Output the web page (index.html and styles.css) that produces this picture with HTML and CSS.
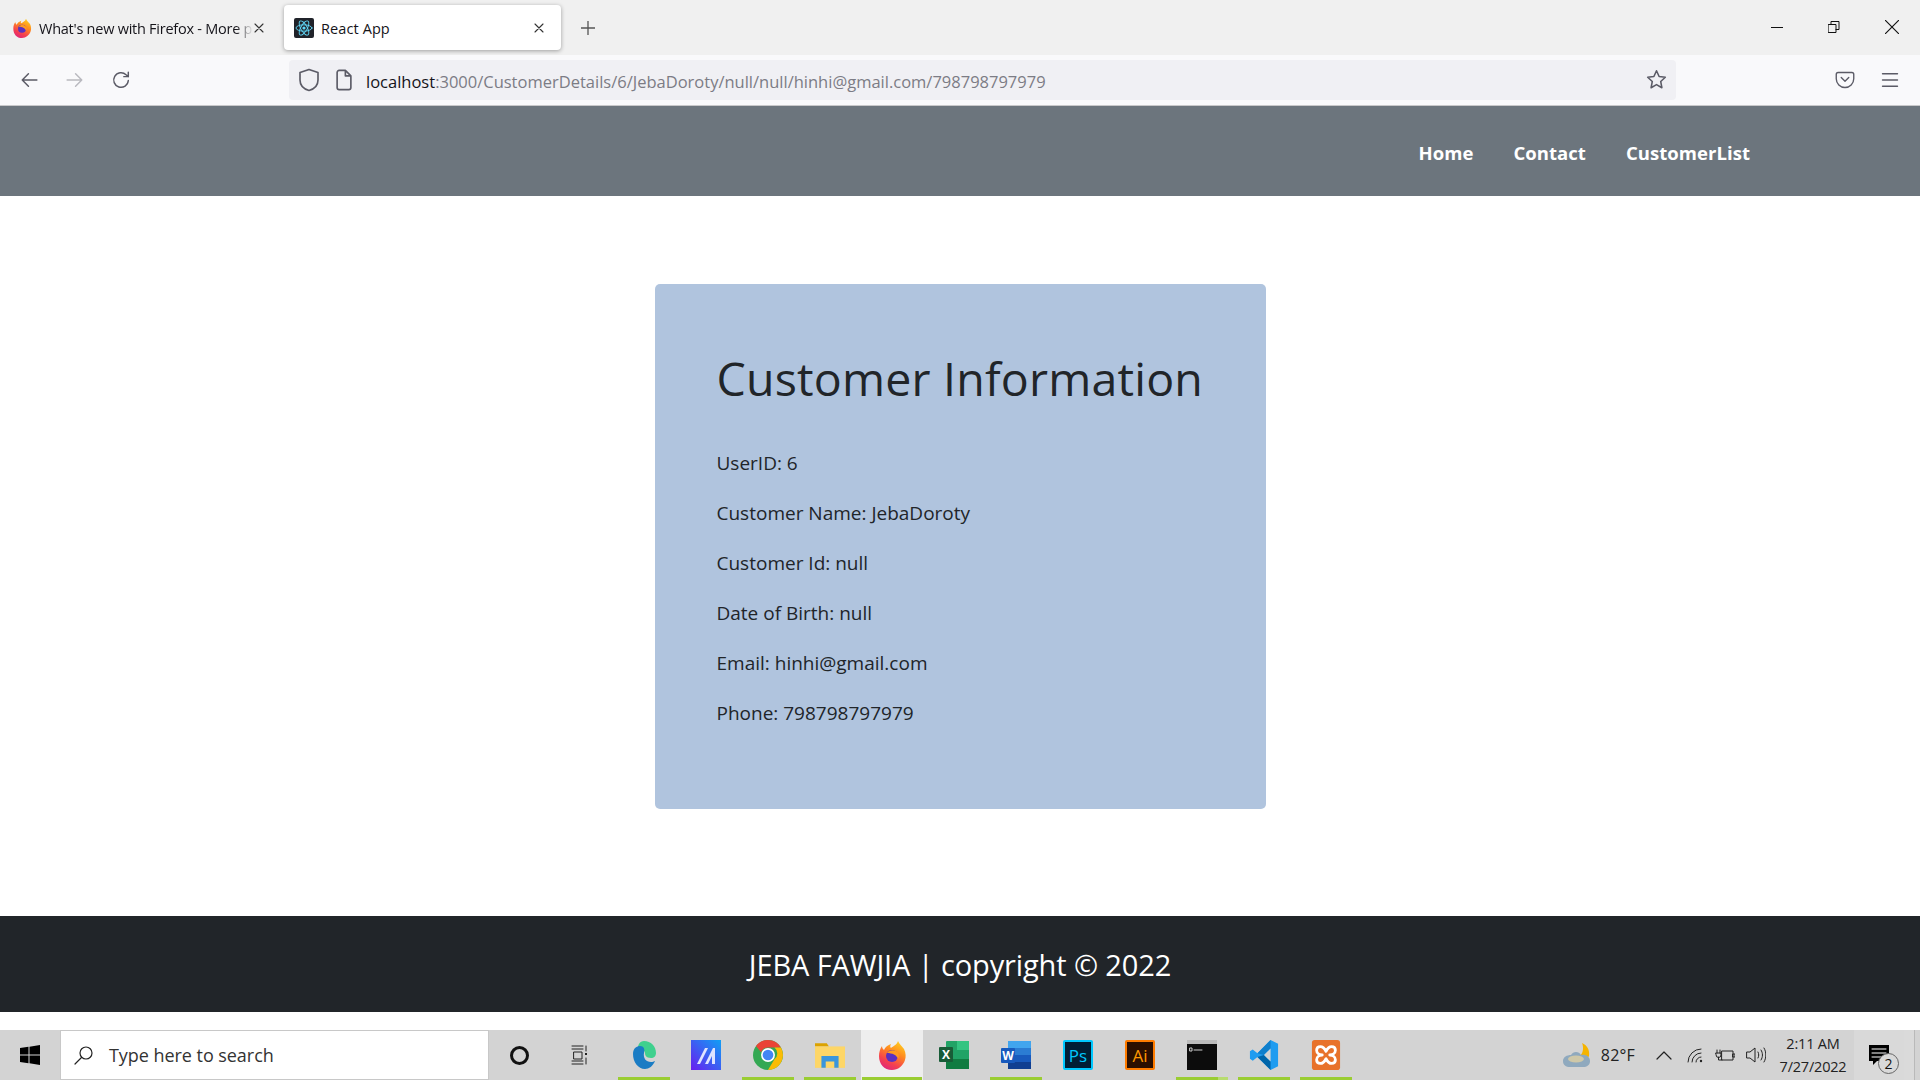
FILE: index.html
```html
<!DOCTYPE html>
<html lang="en">
<head>
<meta charset="utf-8">
<title>React App</title>
<link rel="stylesheet" href="styles.css">
</head>
<body>
<div class="tabbar">
  <div class="tab first">
    <svg class="fav" viewBox="0 0 28 30"><defs><linearGradient id="ff" x1=".8" y1="0" x2=".3" y2="1"><stop offset="0" stop-color="#ffd21f"/><stop offset=".4" stop-color="#ff8a1f"/><stop offset=".75" stop-color="#f5404f"/><stop offset="1" stop-color="#e0267a"/></linearGradient></defs><path d="M20 1c1 3 4 5 6 8 2 4 2 8 1 11-2 6-7 10-13 10C6 30 1 24 1 16c0-4 1-7 3-10 0 2 1 3 2 4 1-3 4-5 7-6-1 2-1 3 0 4 2-2 6-3 7-7z" fill="url(#ff)"/><circle cx="14" cy="16" r="6" fill="#5b2fc0"/><path d="M9 13c2-3 8-4 11 0 1 2 1 4 0 6-1-4-6-6-11-6z" fill="#ff9a1f"/></svg>
    <span class="tab-title fade">What's new with Firefox - More p</span>
    <svg class="x" viewBox="0 0 10 10"><path d="M1 1l8 8M9 1l-8 8"/></svg>
  </div>
  <div class="tab active">
    <svg class="fav" viewBox="0 0 20 20"><rect width="20" height="20" rx="2" fill="#20232a"/><g fill="none" stroke="#61dafb" stroke-width=".9"><ellipse cx="10" cy="10" rx="8" ry="3.200"/><ellipse cx="10" cy="10" rx="8" ry="3.200" transform="rotate(60 10 10)"/><ellipse cx="10" cy="10" rx="8" ry="3.200" transform="rotate(120 10 10)"/></g><circle cx="10" cy="10" r="1.600" fill="#61dafb"/></svg>
    <span class="tab-title">React App</span>
    <svg class="x" viewBox="0 0 10 10"><path d="M1 1l8 8M9 1l-8 8"/></svg>
  </div>
  <svg class="newtab" viewBox="0 0 14 14"><path d="M7 0v14M0 7h14"/></svg>
  <div class="winctl">
    <svg viewBox="0 0 12 12"><path d="M0 6.500h12"/></svg>
    <svg viewBox="0 0 12 12"><path d="M.5 3.500h7.500v8h-7.500zM3 3.500v-3h8v8h-3"/></svg>
    <svg class="close" viewBox="0 0 12 12"><path d="M0 0l12 12M12 0l-12 12"/></svg>
  </div>
</div>

<div class="toolbar">
  <div class="nav-btns">
    <svg viewBox="0 0 16 16"><path d="M15 8H2M7.500 2.500L2 8l5.500 5.500"/></svg>
    <svg class="dim" viewBox="0 0 16 16"><path d="M1 8h13M8.500 2.500L14 8l-5.500 5.500"/></svg>
    <svg viewBox="0 0 16 16"><path d="M14.500 8.500a6.500 6.500 0 1 1-2-5.200L14.500 5M14.500 1v4H10.500"/></svg>
  </div>
  <div class="urlbar">
    <svg class="u-shield" viewBox="0 0 16 16"><path d="M8 1l6 2v5c0 3.500-2.500 6-6 7-3.500-1-6-3.500-6-7V3z"/></svg>
    <svg class="u-page" viewBox="0 0 16 16"><path d="M3 2.500a1.500 1.500 0 0 1 1.500-1.500H9l4 4v8.500a1.500 1.500 0 0 1-1.500 1.500h-7A1.500 1.500 0 0 1 3 13.500zM9 1v4h4"/></svg>
    <span class="url"><b>localhost</b>:3000/CustomerDetails/6/JebaDoroty/null/null/hinhi@gmail.com/798798797979</span>
    <svg class="u-star" viewBox="0 0 16 16"><path d="M8 1.300l2 4.400 4.700.6-3.500 3.200.9 4.800L8 11.900l-4.100 2.400.9-4.800L1.300 6.300 6 5.700z"/></svg>
  </div>
  <div class="tool-right">
    <svg viewBox="0 0 16 16"><path d="M2.500 2h11A1.500 1.500 0 0 1 15 3.500V7a7 7 0 0 1-14 0V3.500A1.500 1.500 0 0 1 2.500 2zM5 6l3 3 3-3"/></svg>
    <svg viewBox="0 0 16 16"><path d="M2 3h12M2 8h12M2 13h12"/></svg>
  </div>
</div>

<header class="site-nav">
  <a>Home</a>
  <a>Contact</a>
  <a>CustomerList</a>
</header>

<main class="content">
  <section class="card">
    <h1>Customer Information</h1>
    <p>UserID: 6</p>
    <p>Customer Name: JebaDoroty</p>
    <p>Customer Id: null</p>
    <p>Date of Birth: null</p>
    <p>Email: hinhi@gmail.com</p>
    <p>Phone: 798798797979</p>
  </section>
</main>

<footer class="site-foot">JEBA FAWJIA | copyright © 2022</footer>
<div class="gap"></div>

<div class="taskbar">
  <svg class="start" viewBox="0 0 20 20"><path d="M0 3l8.500-1.200V9.500H0zM9.500 1.700L20 0v9.500H9.500zM0 10.500h8.500v7.700L0 17zM9.500 10.500H20V20L9.500 18.300z"/></svg>
  <div class="search">
    <svg viewBox="0 0 20 20"><circle cx="12" cy="8" r="6"/><path d="M7.500 12.500L1 19"/></svg>
    <span>Type here to search</span>
  </div>
  <div class="cortana"></div>
  <svg class="taskview" viewBox="0 0 20 20"><path d="M1 1h11M1 4h11M3 7h8v7H3zM1 16h11M1 19h11M15 1v5M15 13v6"/><rect x="14" y="8" width="2" height="2" class="solid"/></svg>
  <div class="apps">
    <div class="app run"><svg viewBox="0 0 24 30"><path d="M12 1c7 0 12 5 12 12 0 3-2 5-5 5-5 0-6-3-6-5 0-3-4-4-7-2C5 5 8 1 12 1z" fill="#3fd08e"/><path d="M1 14C1 8 5 6 8 6c4 0 5 3 4 7-1 5 2 9 7 9 1.500 0 3-.5 4-1-2 5-6 8-10 8C6 29 1 22 1 14z" fill="#1a7cc4"/></svg></div>
    <div class="app"><svg viewBox="0 0 30 30"><defs><linearGradient id="mg" x1="1" y1="0" x2="0" y2="1"><stop offset="0" stop-color="#10a0f5"/><stop offset="1" stop-color="#6a1cf0"/></linearGradient></defs><rect width="30" height="30" fill="url(#mg)"/><path d="M6 24L14 8h3L9 24zM14 24l8-16h2v16h-3v-8l-4 8z" fill="#dfe3ff"/></svg></div>
    <div class="app run"><svg viewBox="0 0 28 28"><circle cx="14" cy="14" r="14" fill="#34a853"/><path d="M14 0a14 14 0 0 1 12.100 7H14a7 7 0 0 0-6.500 4.500L2.800 5.500A14 14 0 0 1 14 0z" fill="#ea4335"/><path d="M26.100 7A14 14 0 0 1 14 28l6-10a7 7 0 0 0 0-11z" fill="#fbbc05"/><circle cx="14" cy="14" r="6.500" fill="#fff"/><circle cx="14" cy="14" r="5" fill="#4285f4"/></svg></div>
    <div class="app run"><svg viewBox="0 0 28 28"><path d="M0 3h11l2 3H0z" fill="#dba200"/><rect y="6" width="28" height="20" fill="#fdd667"/><path d="M6 26V15h16v11h-4v-6h-8v6z" fill="#3a96dd"/></svg></div>
    <div class="app run open"><svg viewBox="0 0 28 30"><path d="M20 1c1 3 4 5 6 8 2 4 2 8 1 11-2 6-7 10-13 10C6 30 1 24 1 16c0-4 1-7 3-10 0 2 1 3 2 4 1-3 4-5 7-6-1 2-1 3 0 4 2-2 6-3 7-7z" fill="url(#ff)"/><circle cx="14" cy="16" r="6" fill="#5b2fc0"/><path d="M9 13c2-3 8-4 11 0 1 2 1 4 0 6-1-4-6-6-11-6z" fill="#ff9a1f"/></svg></div>
    <div class="app"><svg viewBox="0 0 30 30"><rect x="7" y="1" width="23" height="28" rx="1" fill="#21a366"/><rect x="18" y="1" width="12" height="9" fill="#33c481"/><rect x="7" y="19" width="23" height="10" fill="#107c41"/><rect y="7" width="14" height="15" rx="1" fill="#185c37"/><text x="7" y="19" class="ox">X</text></svg></div>
    <div class="app run"><svg viewBox="0 0 30 30"><rect x="7" y="1" width="23" height="28" rx="1" fill="#2b7cd3"/><rect x="7" y="1" width="23" height="7" fill="#41a5ee"/><rect x="7" y="15" width="23" height="7" fill="#185abd"/><rect x="7" y="22" width="23" height="7" fill="#103f91"/><rect y="8" width="14" height="15" rx="1" fill="#185abd"/><text x="7" y="20" class="ox">W</text></svg></div>
    <div class="app"><svg viewBox="0 0 30 30"><rect width="30" height="30" rx="2" fill="#00c8ff"/><rect x="2" y="2" width="26" height="26" fill="#001e36"/><text x="15" y="22" class="ad ps">Ps</text></svg></div>
    <div class="app"><svg viewBox="0 0 30 30"><rect width="30" height="30" rx="2" fill="#ff7c00"/><rect x="2" y="2" width="26" height="26" fill="#2b0f00"/><text x="15" y="22" class="ad ai">Ai</text></svg></div>
    <div class="app run part"><svg viewBox="0 0 30 30"><rect width="30" height="30" fill="#0c0c0c"/><rect width="30" height="4" fill="#bbb"/><path d="M3 8h2v3H3zM7 10h8" stroke="#ccc" fill="none"/></svg></div>
    <div class="app run"><svg viewBox="0 0 30 32"><path d="M22 0l8 4v24l-8 4L8 18l-5 4-3-2V12l3-2 5 4z" fill="#1f9cf0"/><path d="M22 0v9l-7 7-7-2z" fill="#0f7fcc"/><path d="M22 32v-9l-7-7-7 2z" fill="#0065a9"/><path d="M22 9l-7 7 7 7z" fill="#d3d3d3"/></svg></div>
    <div class="app run"><svg viewBox="0 0 30 32"><rect width="30" height="32" rx="3" fill="#e8722a"/><path d="M9 7c3 0 5 3 6 5 1-2 3-5 6-5 3 0 4 2 4 4 0 3-3 5-6 5 3 0 6 2 6 5 0 2-1 4-4 4-3 0-5-3-6-5-1 2-3 5-6 5-3 0-4-2-4-4 0-3 3-5 6-5-3 0-6-2-6-5 0-2 1-4 4-4z" fill="none" stroke="#fff" stroke-width="3"/></svg></div>
  </div>
  <div class="tray">
    <svg class="weather" viewBox="0 0 28 25"><path d="M19 0c5 2 8 7 7 13-1 3-6 3-9 0 3-3 4-8 2-13z" fill="#f5b400"/><path d="M8 12c2-4 8-4 10 0 5-1 9 2 9 6s-3 6-7 6H7c-4 0-7-2-7-6s4-6 8-6z" fill="#8fa9be"/><ellipse cx="13" cy="16" rx="8" ry="3.500" fill="#cfc8a8"/></svg>
    <span class="temp">82°F</span>
    <svg class="chev" viewBox="0 0 16 10"><path d="M1 9l7-7 7 7"/></svg>
    <svg class="ti" viewBox="0 0 18 18"><path d="M1 16A13 13 0 0 1 14 3M5 16a9 9 0 0 1 9-9M9 16a5 5 0 0 1 5-5"/><circle cx="14" cy="15" r="1.200" class="solid"/></svg>
    <svg class="ti wide" viewBox="0 0 20 14"><path d="M7 3h11v9H7zM18 6h2v3h-2zM2 2v3M5 2v3M1 5h5v2a2 2 0 0 1-5 0zM3.500 9v3H7"/></svg>
    <svg class="ti" viewBox="0 0 20 18"><path d="M1 6h3l5-4v14l-5-4H1zM12 6c1 2 1 4 0 6M15 4c2 3 2 7 0 10M18 2c2.500 4 2.500 10 0 14"/></svg>
    <div class="clock"><span>2:11 AM</span><span>7/27/2022</span></div>
    <div class="notify">
      <svg viewBox="0 0 20 20"><path d="M0 0h20v16H8l-4 4v-4H0z" fill="#000"/><path d="M3 4h14M3 8h14M3 12h14" stroke="#fff"/></svg>
      <span class="badge">2</span>
    </div>
    <div class="desktop"></div>
  </div>
</div>
</body>
</html>
```
FILE: styles.css
```css
* { box-sizing: border-box; }
html, body { margin: 0; padding: 0; height: 100%; }
body {
  width: 1920px;
  height: 1080px;
  overflow: hidden;
  display: flex;
  flex-direction: column;
  font-family: "Open Sans", "Noto Sans", sans-serif;
  background: #fff;
  color: #212529;
}
svg { display: block; flex: none; fill: none; stroke-linecap: round; stroke-linejoin: round; }

.tabbar {
  height: 55px;
  flex: none;
  background: #f0f0f0;
  display: flex;
  align-items: flex-start;
  padding-top: 5px;
}
.tab {
  height: 45px;
  display: flex;
  align-items: center;
  gap: 7px;
  font-size: 14.500px;
  letter-spacing: -0.25px;
  color: #15141a;
  border-radius: 4px;
}
.tab.first { width: 277px; padding: 0 14px 0 12px; margin-right: 7px; }
.tab.active {
  width: 277px;
  padding: 0 17px 0 10px;
  background: #fff;
  box-shadow: 0 1px 4px rgba(0,0,0,.35);
  letter-spacing: 0.1px;
}
.fav { width: 20px; height: 20px; }
.tab-title { flex: 1; white-space: nowrap; min-width: 0; padding-top: 1px; }
.tab-title.fade {
  flex: none;
  margin-right: -6px;
  padding-right: 1px;
  -webkit-mask-image: linear-gradient(90deg,#000 92%,transparent 100%);
  mask-image: linear-gradient(90deg,#000 92%,transparent 100%);
}
.x { width: 10px; height: 10px; stroke: #333; stroke-width: 1.100; margin-left: auto; }
.newtab { width: 14px; height: 14px; margin: 16px 0 0 20px; stroke: #555; stroke-width: 1.300; }
.winctl {
  margin-left: auto;
  display: flex;
  align-items: center;
  gap: 45px;
  padding: 15px 21px 0 0;
}
.winctl svg { width: 12px; height: 12px; stroke: #111; stroke-width: 1; }
.winctl svg.close { width: 14px; height: 14px; }

.toolbar {
  height: 51px;
  flex: none;
  background: #f9f9fb;
  border-bottom: 1px solid #c8c8ca;
  display: flex;
  align-items: center;
}
.nav-btns { width: 289px; display: flex; gap: 28px; padding-left: 20px; }
.nav-btns svg { width: 18px; height: 18px; stroke: #5b5b66; stroke-width: 1.300; }
.nav-btns svg.dim { stroke: #b9b9bf; }
.urlbar {
  width: 1387px;
  height: 40px;
  background: #f0f0f4;
  border-radius: 4px;
  display: flex;
  align-items: center;
  padding: 0 9px 0 8px;
  gap: 11px;
  margin-bottom: 1px;
}
.u-shield { width: 24px; height: 24px; stroke: #5b5b66; stroke-width: 1.100; }
.u-page { width: 22px; height: 22px; margin-left: 1px; stroke: #5b5b66; stroke-width: 1.200; }
.u-star { width: 21px; height: 21px; margin-left: auto; stroke: #5b5b66; stroke-width: 1.200; }
.url {
  font-size: 16.500px;
  line-height: 22px;
  color: #7c7c85;
  white-space: nowrap;
  padding-top: 4px;
}
.url b { font-weight: 400; color: #15141a; }
.tool-right { display: flex; gap: 25px; margin-left: 159px; }
.tool-right svg { width: 20px; height: 20px; stroke: #5b5b66; stroke-width: 1.100; }

.site-nav {
  height: 90px;
  flex: none;
  background: #6c757d;
  display: flex;
  justify-content: flex-end;
  align-items: center;
  gap: 40px;
  padding: 2px 170px 0 0;
}
.site-nav a {
  color: #fff;
  font-weight: 700;
  font-size: 18.500px;
  letter-spacing: 0.05px;
}

.content {
  flex: 1;
  min-height: 0;
  display: flex;
  justify-content: center;
  padding-top: 88px;
}
.card {
  width: 611px;
  height: 525px;
  background: #b0c4de;
  border-radius: 5px;
  padding: 61px 62px 0;
}
.card h1 {
  margin: 0 0 37px;
  font-size: 46.500px;
  line-height: 66px;
  font-weight: 400;
  letter-spacing: 0.2px;
  white-space: nowrap;
}
.card p {
  margin: 0 0 20px;
  font-size: 19px;
  line-height: 30px;
}

.site-foot {
  height: 96px;
  flex: none;
  background: #212529;
  color: #fff;
  display: flex;
  align-items: center;
  justify-content: center;
  font-size: 29px;
  letter-spacing: -0.12px;
}
.gap { height: 18px; flex: none; background: #fff; }

.taskbar {
  height: 50px;
  flex: none;
  background: #d3d3d3;
  display: flex;
  align-items: center;
}
.start { width: 20px; height: 20px; margin-left: 20px; fill: #000; }
.search {
  width: 429px;
  height: 50px;
  margin-left: 20px;
  background: #fff;
  border: 1px solid #c8c8c8;
  display: flex;
  align-items: center;
  padding-left: 13px;
  gap: 15px;
  font-size: 18px;
  letter-spacing: -0.05px;
  color: #333;
}
.search svg { width: 20px; height: 20px; stroke: #222; stroke-width: 1.200; }
.cortana {
  width: 19px;
  height: 19px;
  margin-left: 21px;
  border: 3px solid #111;
  border-radius: 50%;
}
.taskview { width: 20px; height: 20px; margin-left: 42px; stroke: #222; stroke-width: 1; }
.apps { display: flex; margin-left: 22px; height: 50px; }
.app {
  width: 62px;
  height: 50px;
  display: flex;
  align-items: center;
  justify-content: center;
  position: relative;
}
.app svg { width: 30px; height: 30px; }
.app.run::after {
  content: "";
  position: absolute;
  left: 5px;
  right: 5px;
  bottom: 0;
  height: 3px;
  background: #9acd32;
}
.app.open { background: #eeeeee; }
.app.open::after { left: 1px; right: 1px; }
.app.part::after { background: linear-gradient(90deg, #9acd32 80%, #b8dc70 80%); }
.ox { font: 700 12px "Open Sans", sans-serif; fill: #fff; text-anchor: middle; }
.ad { font: 400 17px "Open Sans", sans-serif; text-anchor: middle; }
.ps { fill: #00c8ff; }
.ai { fill: #ff9a00; }

.tray { margin-left: auto; display: flex; align-items: center; height: 50px; }
.weather { width: 28px; height: 25px; margin-right: 10px; }
.temp { font-size: 16px; letter-spacing: 0.2px; color: #222; margin-right: 21px; }
.chev { width: 16px; height: 10px; stroke: #222; stroke-width: 1.200; margin-right: 14px; }
.ti { width: 20px; height: 18px; stroke: #222; stroke-width: 1; margin-right: 9px; }
.ti.wide { width: 20px; height: 14px; margin-right: 11px; }
.solid { fill: #222; stroke: none; }
.clock {
  display: flex;
  flex-direction: column;
  align-items: center;
  font-size: 14.500px;
  line-height: 23px;
  letter-spacing: -0.2px;
  color: #222;
  margin: 0 7px 0 4px;
  width: 68px;
}
.notify {
  width: 50px;
  height: 50px;
  background: #d9d9d9;
  position: relative;
  padding: 15px 0 0 15px;
}
.notify svg { width: 20px; height: 20px; }
.badge {
  position: absolute;
  left: 24px;
  top: 23px;
  width: 21px;
  height: 21px;
  border-radius: 50%;
  border: 1px solid #666;
  background: #d9d9d9;
  font-size: 14px;
  line-height: 19px;
  text-align: center;
  color: #111;
}
.desktop {
  width: 16px;
  height: 50px;
  background: linear-gradient(90deg, #dadada 10px, #b9b9b9 10px, #b9b9b9 11px, #d3d3d3 11px);
}
```
